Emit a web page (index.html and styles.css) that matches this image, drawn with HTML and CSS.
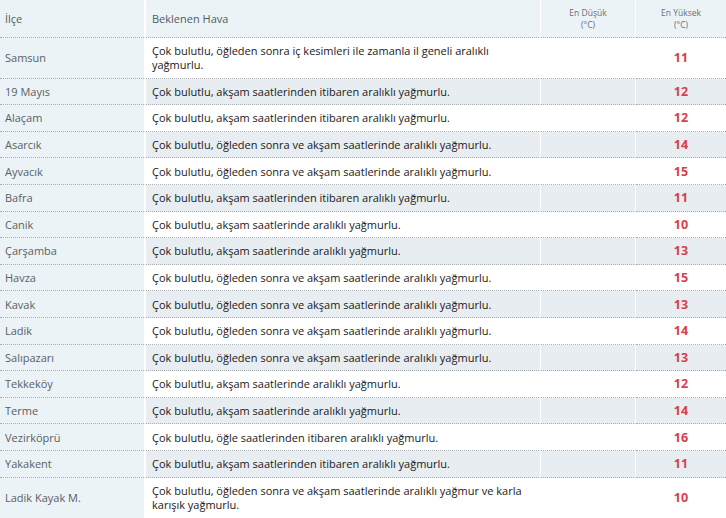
FILE: index.html
```html
<!DOCTYPE html>
<html lang="tr">
<head>
<meta charset="utf-8">
<title>Samsun Hava Durumu</title>
<link rel="stylesheet" href="styles.css">
</head>
<body>
<table class="forecast">
  <colgroup>
    <col class="c-ilce">
    <col class="c-hava">
    <col class="c-min">
    <col class="c-max">
  </colgroup>
  <thead>
    <tr>
      <th class="h-left">İlçe</th>
      <th class="h-left">Beklenen Hava</th>
      <th class="h-small">En Düşük<br>(°C)</th>
      <th class="h-small">En Yüksek<br>(°C)</th>
    </tr>
  </thead>
  <tbody>
    <tr><td class="ilce">Samsun</td><td class="hava">Çok bulutlu, öğleden sonra iç kesimleri ile zamanla il geneli aralıklı yağmurlu.</td><td class="min"></td><td class="max">11</td></tr>
    <tr><td class="ilce">19 Mayıs</td><td class="hava">Çok bulutlu, akşam saatlerinden itibaren aralıklı yağmurlu.</td><td class="min"></td><td class="max">12</td></tr>
    <tr><td class="ilce">Alaçam</td><td class="hava">Çok bulutlu, akşam saatlerinden itibaren aralıklı yağmurlu.</td><td class="min"></td><td class="max">12</td></tr>
    <tr><td class="ilce">Asarcık</td><td class="hava">Çok bulutlu, öğleden sonra ve akşam saatlerinde aralıklı yağmurlu.</td><td class="min"></td><td class="max">14</td></tr>
    <tr><td class="ilce">Ayvacık</td><td class="hava">Çok bulutlu, öğleden sonra ve akşam saatlerinde aralıklı yağmurlu.</td><td class="min"></td><td class="max">15</td></tr>
    <tr><td class="ilce">Bafra</td><td class="hava">Çok bulutlu, akşam saatlerinden itibaren aralıklı yağmurlu.</td><td class="min"></td><td class="max">11</td></tr>
    <tr><td class="ilce">Canik</td><td class="hava">Çok bulutlu, akşam saatlerinde aralıklı yağmurlu.</td><td class="min"></td><td class="max">10</td></tr>
    <tr><td class="ilce">Çarşamba</td><td class="hava">Çok bulutlu, akşam saatlerinde aralıklı yağmurlu.</td><td class="min"></td><td class="max">13</td></tr>
    <tr><td class="ilce">Havza</td><td class="hava">Çok bulutlu, öğleden sonra ve akşam saatlerinde aralıklı yağmurlu.</td><td class="min"></td><td class="max">15</td></tr>
    <tr><td class="ilce">Kavak</td><td class="hava">Çok bulutlu, öğleden sonra ve akşam saatlerinde aralıklı yağmurlu.</td><td class="min"></td><td class="max">13</td></tr>
    <tr><td class="ilce">Ladik</td><td class="hava">Çok bulutlu, öğleden sonra ve akşam saatlerinde aralıklı yağmurlu.</td><td class="min"></td><td class="max">14</td></tr>
    <tr><td class="ilce">Salıpazarı</td><td class="hava">Çok bulutlu, öğleden sonra ve akşam saatlerinde aralıklı yağmurlu.</td><td class="min"></td><td class="max">13</td></tr>
    <tr><td class="ilce">Tekkeköy</td><td class="hava">Çok bulutlu, akşam saatlerinde aralıklı yağmurlu.</td><td class="min"></td><td class="max">12</td></tr>
    <tr><td class="ilce">Terme</td><td class="hava">Çok bulutlu, akşam saatlerinde aralıklı yağmurlu.</td><td class="min"></td><td class="max">14</td></tr>
    <tr><td class="ilce">Vezirköprü</td><td class="hava">Çok bulutlu, öğle saatlerinden itibaren aralıklı yağmurlu.</td><td class="min"></td><td class="max">16</td></tr>
    <tr><td class="ilce">Yakakent</td><td class="hava">Çok bulutlu, akşam saatlerinden itibaren aralıklı yağmurlu.</td><td class="min"></td><td class="max">11</td></tr>
    <tr><td class="ilce">Ladik Kayak M.</td><td class="hava">Çok bulutlu, öğleden sonra ve akşam saatlerinde aralıklı yağmur ve karla karışık yağmurlu.</td><td class="min"></td><td class="max">10</td></tr>
  </tbody>
</table>
</body>
</html>
```

FILE: styles.css
```css
html, body {
  margin: 0;
  padding: 0;
  background: #ffffff;
}

body {
  font-family: "Open Sans", "Noto Sans", sans-serif;
  font-size: 11px;
  line-height: 14.4px;
  color: #222222;
  overflow: hidden;
}

.forecast {
  width: 726px;
  border-collapse: separate;
  border-spacing: 0;
  table-layout: fixed;
}

.c-ilce { width: 146px; }
.c-hava { width: 395px; }
.c-min { width: 95px; }
.c-max { width: 90px; }

.forecast th,
.forecast td {
  padding: 6.2px 6px 5px;
  border-bottom: 1px dotted #a9b0b5;
  border-right: 1px solid #ffffff;
  vertical-align: middle;
  font-weight: normal;
}

.forecast th:last-child,
.forecast td:last-child {
  border-right: 0;
}

.forecast th {
  background: #ebf3f7;
  color: #555a5e;
  height: 25.5px;
  box-sizing: content-box;
}

.forecast th.h-left {
  text-align: left;
  padding-left: 6px;
}

.forecast th.h-small {
  text-align: center;
  font-size: 8.5px;
  line-height: 12.4px;
  color: #6a6f73;
}

.forecast td.ilce {
  background: #ebf3f7;
  color: #5a5f63;
  padding-left: 5px;
  border-right-width: 2px;
}

.forecast th:first-child {
  border-right-width: 2px;
  padding-left: 5px;
}

.forecast td.hava {
  color: #1a1a1a;
}

.forecast td.max {
  text-align: center;
  color: #d8404a;
  font-weight: bold;
  font-size: 12.5px;
}

.forecast tbody tr:nth-child(even) td.hava,
.forecast tbody tr:nth-child(even) td.min,
.forecast tbody tr:nth-child(even) td.max {
  background: #e8edf1;
}
```
